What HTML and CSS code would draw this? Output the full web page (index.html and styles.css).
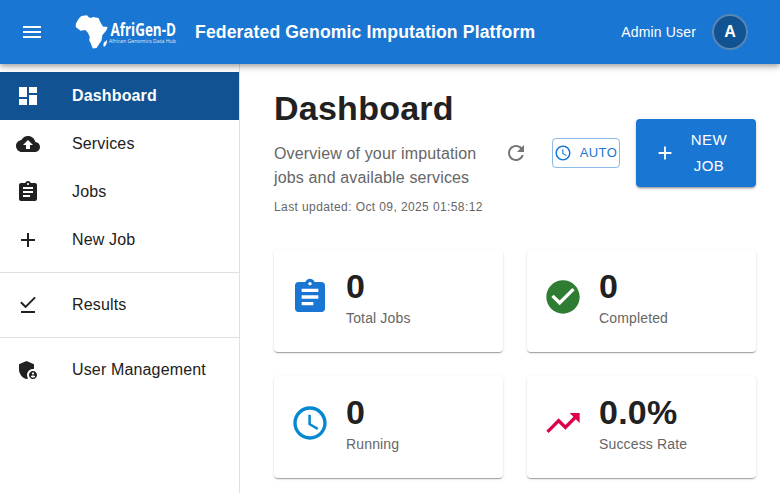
FILE: index.html
```html
<!DOCTYPE html>
<html lang="en">
<head>
<meta charset="utf-8">
<title>Federated Genomic Imputation Platform</title>
<link rel="stylesheet" href="styles.css">
</head>
<body>
<header class="appbar">
  <svg class="icon" viewBox="0 0 24 24"><path d="M3 18h18v-2H3v2zm0-5h18v-2H3v2zm0-7v2h18V6H3z"/></svg>
  <svg class="logo" viewBox="0 0 104 40" role="img" aria-label="AfriGen-D">
    <path d="M1.700 15 1.900 11.500 4.700 6.700 7.300 4 13 3.200 14.800 5.200 17 6 19 4.900 24.500 6 26.300 10 28.900 14.600 33.700 15 32.300 18.500 28.300 23.300 27.500 28.500 24.500 33 22.500 35.900 18.700 36.600 16.900 31.700 15.200 28.300 15.800 25 13.700 20.500 11.300 17.900 6.500 18.800Z"/>
    <path d="M33 28 32.800 31 31 34.500 29.300 34.200 29.700 30.800Z"/>
    <text class="logo-name" x="36.500" y="24" textLength="65.500" lengthAdjust="spacingAndGlyphs">AfriGen-D</text>
    <text class="logo-tag" x="35" y="30.800" textLength="67" lengthAdjust="spacingAndGlyphs">African Genomics Data Hub</text>
  </svg>
  <div class="brand">Federated Genomic Imputation Platform</div>
  <span class="user">Admin User</span>
  <div class="avatar">A</div>
</header>
<div class="layout">
  <nav class="sidebar">
    <a class="item active"><svg class="icon" viewBox="0 0 24 24"><path d="M3 13h8V3H3v10zm0 8h8v-6H3v6zm10 0h8V11h-8v10zm0-18v6h8V3h-8z"/></svg>Dashboard</a>
    <a class="item"><svg class="icon" viewBox="0 0 24 24"><path d="M19.350 10.040C18.670 6.590 15.640 4 12 4 9.110 4 6.600 5.640 5.350 8.040 2.340 8.360 0 10.910 0 14c0 3.310 2.690 6 6 6h13c2.760 0 5-2.240 5-5 0-2.640-2.050-4.780-4.650-4.960zM14 13v4h-4v-4H7l5-5 5 5h-3z"/></svg>Services</a>
    <a class="item"><svg class="icon" viewBox="0 0 24 24"><path d="M19 3h-4.180C14.400 1.840 13.300 1 12 1c-1.300 0-2.400.84-2.820 2H5c-1.100 0-2 .9-2 2v14c0 1.100.9 2 2 2h14c1.100 0 2-.9 2-2V5c0-1.100-.9-2-2-2zm-7 0c.55 0 1 .45 1 1s-.45 1-1 1-1-.45-1-1 .45-1 1-1zm2 14H7v-2h7v2zm3-4H7v-2h10v2zm0-4H7V7h10v2z"/></svg>Jobs</a>
    <a class="item"><svg class="icon" viewBox="0 0 24 24"><path d="M19 13h-6v6h-2v-6H5v-2h6V5h2v6h6v2z"/></svg>New Job</a>
    <hr class="divider">
    <a class="item"><svg class="icon" viewBox="0 0 24 24"><path d="M5 18h14v2H5zM9.600 15.300 4.200 9.900l1.400-1.400 4 4L18.400 3.700l1.400 1.400z"/></svg>Results</a>
    <hr class="divider">
    <a class="item"><svg class="icon" viewBox="0 0 24 24"><path d="M17 11c.34 0 .67.040 1 .09V6.270L10.500 3 3 6.270v4.910c0 4.540 3.200 8.790 7.500 9.820.55-.13 1.080-.32 1.600-.55-.69-.98-1.100-2.170-1.100-3.450 0-3.310 2.690-6 6-6z"/><path d="M17 13c-2.210 0-4 1.790-4 4s1.790 4 4 4 4-1.790 4-4-1.790-4-4-4zm0 1.380c.62 0 1.120.51 1.120 1.120s-.51 1.120-1.120 1.120-1.120-.51-1.120-1.120.5-1.120 1.120-1.120zm0 5.370c-.93 0-1.740-.46-2.240-1.170.05-.72 1.510-1.080 2.240-1.080s2.190.36 2.240 1.080c-.5.71-1.310 1.170-2.240 1.170z"/></svg>User Management</a>
  </nav>
  <main class="main">
    <section class="page-head">
      <div class="intro">
        <h1 class="title">Dashboard</h1>
        <p class="lead">Overview of your imputation jobs and available services</p>
        <p class="updated">Last updated: Oct 09, 2025 01:58:12</p>
      </div>
      <div class="actions">
        <button class="refresh" aria-label="Refresh"><svg class="icon" viewBox="0 0 24 24"><path d="M17.650 6.350C16.200 4.900 14.210 4 12 4c-4.420 0-7.990 3.580-7.990 8s3.570 8 7.990 8c3.730 0 6.840-2.550 7.730-6h-2.080c-.82 2.330-3.040 4-5.650 4-3.310 0-6-2.690-6-6s2.690-6 6-6c1.660 0 3.140.69 4.220 1.780L13 11h7V4l-2.350 2.350z"/></svg></button>
        <button class="auto"><svg class="icon" viewBox="0 0 24 24"><path d="M11.990 2C6.470 2 2 6.480 2 12s4.470 10 9.990 10C17.520 22 22 17.520 22 12S17.520 2 11.990 2zM12 20c-4.420 0-8-3.580-8-8s3.580-8 8-8 8 3.580 8 8-3.580 8-8 8zm.5-13H11v6l5.250 3.150.75-1.230-4.500-2.670z"/></svg>AUTO</button>
        <button class="new-job"><svg class="icon" viewBox="0 0 24 24"><path d="M19 13h-6v6h-2v-6H5v-2h6V5h2v6h6v2z"/></svg><span>NEW JOB</span></button>
      </div>
    </section>
    <section class="stats">
      <article class="card"><svg class="icon blue" viewBox="0 0 24 24"><path d="M19 3h-4.180C14.400 1.840 13.300 1 12 1c-1.300 0-2.400.84-2.820 2H5c-1.100 0-2 .9-2 2v14c0 1.100.9 2 2 2h14c1.100 0 2-.9 2-2V5c0-1.100-.9-2-2-2zm-7 0c.55 0 1 .45 1 1s-.45 1-1 1-1-.45-1-1 .45-1 1-1zm2 14H7v-2h7v2zm3-4H7v-2h10v2zm0-4H7V7h10v2z"/></svg><div><div class="value">0</div><div class="label">Total Jobs</div></div></article>
      <article class="card"><svg class="icon green" viewBox="0 0 24 24"><path d="M12 2C6.480 2 2 6.480 2 12s4.480 10 10 10 10-4.480 10-10S17.520 2 12 2zm-2 15-5-5 1.410-1.410L10 14.170l7.590-7.590L19 8l-9 9z"/></svg><div><div class="value">0</div><div class="label">Completed</div></div></article>
      <article class="card"><svg class="icon sky" viewBox="0 0 24 24"><path d="M11.990 2C6.470 2 2 6.480 2 12s4.470 10 9.990 10C17.520 22 22 17.520 22 12S17.520 2 11.990 2zM12 20c-4.420 0-8-3.580-8-8s3.580-8 8-8 8 3.580 8 8-3.580 8-8 8zm.5-13H11v6l5.250 3.150.75-1.230-4.500-2.670z"/></svg><div><div class="value">0</div><div class="label">Running</div></div></article>
      <article class="card"><svg class="icon pink" viewBox="0 0 24 24"><path d="m16 6 2.290 2.290-4.880 4.880-4-4L2 16.590 3.410 18l6-6 4 4 6.300-6.290L22 12V6z"/></svg><div><div class="value">0.0%</div><div class="label">Success Rate</div></div></article>
    </section>
  </main>
</div>
</body>
</html>
```
FILE: styles.css
```css
* { box-sizing: border-box; }
body {
  margin: 0;
  height: 493px;
  overflow: hidden;
  background: #fff;
  color: #212121;
  font: 16px/1.5 "Liberation Sans", Arial, sans-serif;
  letter-spacing: 0.00938em;
}
h1, p { margin: 0; }
button { border: 0; background: none; padding: 0; margin: 0; font: inherit; flex-shrink: 0; }
.icon { width: 24px; height: 24px; fill: currentColor; flex-shrink: 0; display: block; }

.appbar {
  position: relative;
  z-index: 1;
  display: flex;
  align-items: center;
  height: 64px;
  padding: 0 32px 0 20px;
  background: #1976d2;
  color: #fff;
  box-shadow: 0 2px 4px -1px rgba(0,0,0,.2), 0 4px 5px rgba(0,0,0,.14), 0 1px 10px rgba(0,0,0,.12);
}
.logo { width: 104px; height: 40px; margin-left: 30px; fill: #fff; letter-spacing: 0; overflow: visible; }
.logo-name { font: 700 17px "Open Sans", sans-serif; }
.logo-tag { font: 5.500px "Open Sans", sans-serif; opacity: .85; }
.brand { flex: 1; margin-left: 17px; font-size: 17.600px; font-weight: 700; white-space: nowrap; letter-spacing: 0.0075em; }
.user { font-size: 14px; letter-spacing: 0.01071em; margin-right: 16px; }
.avatar {
  display: flex;
  align-items: center;
  justify-content: center;
  width: 36px;
  height: 36px;
  border: 2px solid rgba(255,255,255,.3);
  border-radius: 50%;
  background: #115293;
  font-weight: 700;
  letter-spacing: 0;
}

.layout { display: flex; height: 429px; }
.sidebar { width: 240px; flex-shrink: 0; padding-top: 8px; border-right: 1px solid #e0e0e0; }
.item { display: flex; align-items: center; gap: 32px; height: 48px; padding-left: 16px; }
.active { background: #115293; color: #fff; font-weight: 700; }
.divider { height: 1px; margin: 8px 0; border: 0; background: #e0e0e0; }

.main { flex: 1; padding: 24px 24px 0 34px; }
.page-head { display: flex; align-items: center; height: 130px; margin-bottom: 32px; }
.intro { flex: 1; }
.title { margin-bottom: 14px; font-size: 34px; line-height: 40px; font-weight: 700; letter-spacing: 0.00735em; }
.lead { color: #666; }
.updated { margin-top: 7px; padding-bottom: 1px; color: #666; font-size: 12px; line-height: 20px; letter-spacing: 0.03333em; white-space: nowrap; }
.actions { display: flex; align-items: center; gap: 16px; }
.refresh { padding: 8px; color: #757575; }
.auto {
  display: flex;
  align-items: center;
  justify-content: center;
  gap: 8px;
  width: 68px;
  height: 30px;
  padding-right: 1px;
  border: 1px solid rgba(25,118,210,.5);
  border-radius: 4px;
  color: #1976d2;
  font-size: 13px;
  letter-spacing: 0.02857em;
}
.auto .icon { width: 18px; height: 18px; }
.new-job {
  display: flex;
  align-items: center;
  gap: 8px;
  width: 120px;
  height: 68px;
  padding: 8px 22px 8px 18px;
  border-radius: 4px;
  background: #1976d2;
  color: #fff;
  font-size: 15px;
  line-height: 26.250px;
  letter-spacing: 0.02857em;
  box-shadow: 0 3px 1px -2px rgba(0,0,0,.2), 0 2px 2px rgba(0,0,0,.14), 0 1px 5px rgba(0,0,0,.12);
}
.new-job .icon { width: 22px; height: 22px; }
.new-job span { flex: 1; text-align: center; }

.stats { display: grid; grid-template-columns: 1fr 1fr; gap: 24px; }
.card {
  display: flex;
  align-items: center;
  gap: 16px;
  height: 102px;
  padding: 16px 16px 24px;
  border-radius: 4px;
  background: #fff;
  box-shadow: 0 2px 1px -1px rgba(0,0,0,.2), 0 1px 1px rgba(0,0,0,.14), 0 1px 3px rgba(0,0,0,.12);
}
.card .icon { width: 40px; height: 40px; }
.value { padding-bottom: 2px; font-size: 34px; line-height: 40px; font-weight: 700; letter-spacing: 0.00735em; }
.label { color: #666; font-size: 14px; line-height: 20px; letter-spacing: 0.01071em; }
.blue { color: #1976d2; }
.green { color: #2e7d32; }
.sky { color: #0288d1; }
.pink { color: #dc004e; }
```
